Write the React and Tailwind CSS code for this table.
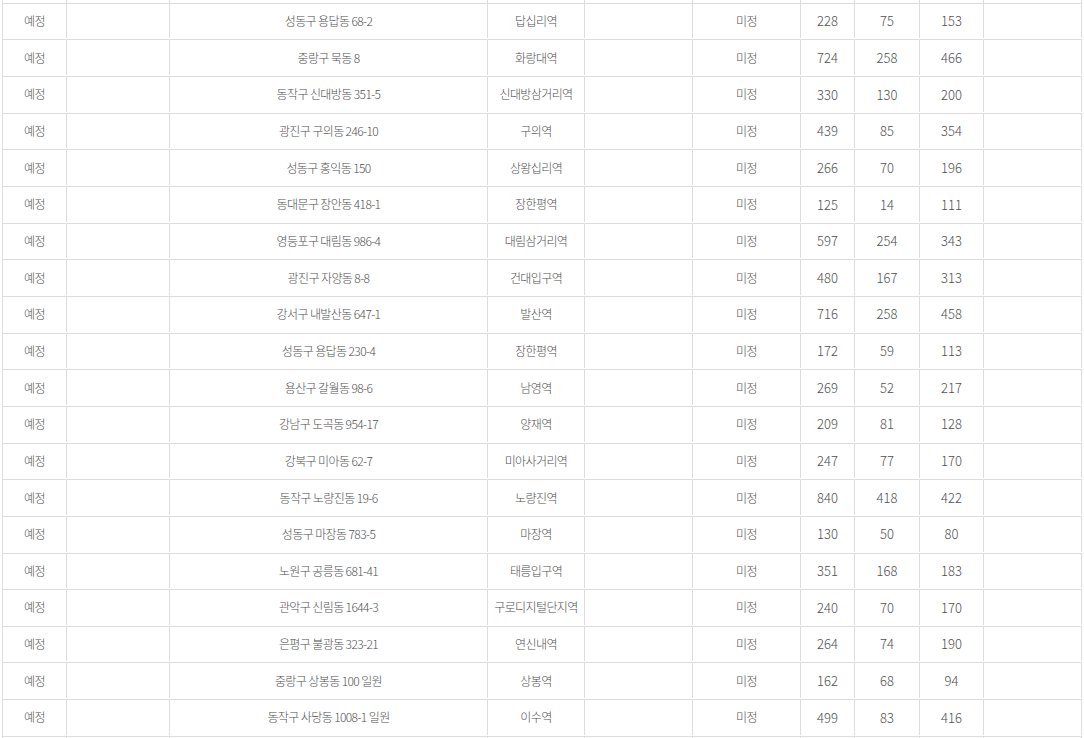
import React from "react";

// 역세권 청년주택 사업 목록 (스크롤된 상태)
const ROWS = [
  ["성동구 용답동 68-2", "답십리역", "228", "75", "153"],
  ["중랑구 묵동 8", "화랑대역", "724", "258", "466"],
  ["동작구 신대방동 351-5", "신대방삼거리역", "330", "130", "200"],
  ["광진구 구의동 246-10", "구의역", "439", "85", "354"],
  ["성동구 홍익동 150", "상왕십리역", "266", "70", "196"],
  ["동대문구 장안동 418-1", "장한평역", "125", "14", "111"],
  ["영등포구 대림동 986-4", "대림삼거리역", "597", "254", "343"],
  ["광진구 자양동 8-8", "건대입구역", "480", "167", "313"],
  ["강서구 내발산동 647-1", "발산역", "716", "258", "458"],
  ["성동구 용답동 230-4", "장한평역", "172", "59", "113"],
  ["용산구 갈월동 98-6", "남영역", "269", "52", "217"],
  ["강남구 도곡동 954-17", "양재역", "209", "81", "128"],
  ["강북구 미아동 62-7", "미아사거리역", "247", "77", "170"],
  ["동작구 노량진동 19-6", "노량진역", "840", "418", "422"],
  ["성동구 마장동 783-5", "마장역", "130", "50", "80"],
  ["노원구 공릉동 681-41", "태릉입구역", "351", "168", "183"],
  ["관악구 신림동 1644-3", "구로디지털단지역", "240", "70", "170"],
  ["은평구 불광동 323-21", "연신내역", "264", "74", "190"],
  ["중랑구 상봉동 100 일원", "상봉역", "162", "68", "94"],
  ["동작구 사당동 1008-1 일원", "이수역", "499", "83", "416"],
];

const COLS = "grid grid-cols-[64px_103px_318px_97px_108px_108px_54px_65px_64px_98px] border-b border-[#dddddd]";

const Cell = ({ children, num }) => (
  <div
    className={`flex items-center justify-center border-r border-[#dddddd] whitespace-nowrap ${
      num ? "text-[13px] tracking-normal" : ""
    }`}
  >
    {children}
  </div>
);

// 스크롤로 잘린 위/아래 행 (세로선만 보임)
const EdgeRow = ({ className }) => (
  <div className={`${COLS} ${className}`}>
    {Array.from({ length: 10 }).map((_, i) => (
      <Cell key={i} />
    ))}
  </div>
);

export default function App() {
  return (
    <div
      className="h-[738px] overflow-hidden bg-white text-[12px] tracking-[-0.6px] font-light text-[#505050]"
      style={{ fontFamily: '"Noto Sans CJK KR", "Noto Sans", sans-serif' }}
    >
      <div className="ml-[2px] w-[1080px] border-l border-[#dddddd]">
        <EdgeRow className="h-[3.667px]" />
        {ROWS.map((row, i) => (
          <div key={i} className={`${COLS} h-[36.667px] pb-[1px]`}>
            <Cell>예정</Cell>
            <Cell />
            <Cell>{row[0]}</Cell>
            <Cell>{row[1]}</Cell>
            <Cell />
            <Cell>미정</Cell>
            <Cell num>{row[2]}</Cell>
            <Cell num>{row[3]}</Cell>
            <Cell num>{row[4]}</Cell>
            <Cell />
          </div>
        ))}
        <EdgeRow className="h-[20px]" />
      </div>
    </div>
  );
}
